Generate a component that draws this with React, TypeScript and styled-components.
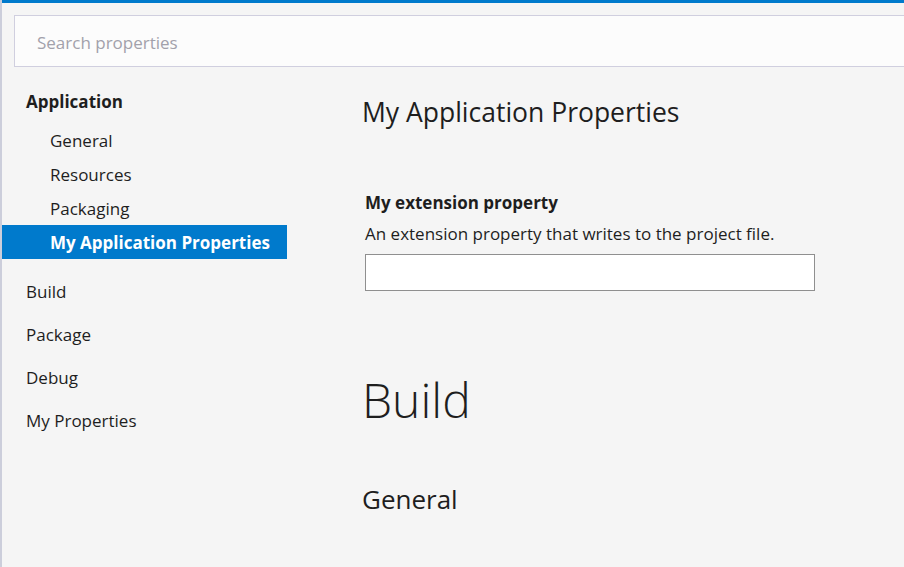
import React from "react";
import styled, { createGlobalStyle } from "styled-components";

const Global = createGlobalStyle`
  html, body { margin: 0; padding: 0; background: #f5f5f5; }
  body { font-family: "Open Sans", "Noto Sans", sans-serif; color: #1e1e1e; }
  * { box-sizing: border-box; }
`;

const Page = styled.div`
  width: 904px;
  height: 567px;
  overflow: hidden;
  display: flex;
  flex-direction: column;
  border-left: 2px solid #cccedb;
  background: #f5f5f5;
`;

const TopBar = styled.div`
  height: 3px;
  background: #007acc;
  flex: none;
`;

const SearchRow = styled.div`
  padding: 12px 0 0 12px;
  margin-right: -20px;
  flex: none;
`;

const SearchBox = styled.input`
  display: block;
  width: 100%;
  height: 52px;
  border: 1px solid #d0cfdf;
  background: #fcfcfc;
  padding: 3px 0 0 22px;
  font-family: "Open Sans", sans-serif;
  font-size: 17px;
  color: #1e1e1e;
  outline: none;
  &::placeholder { color: #a2a1ab; }
`;

const Body = styled.div`
  flex: 1;
  display: grid;
  grid-template-columns: 285px 1fr;
  padding-top: 13px;
`;

const Nav = styled.nav`
  display: flex;
  flex-direction: column;
`;

const NavTop = styled.div<{ $bold?: boolean }>`
  height: 43px;
  display: flex;
  align-items: center;
  padding-left: 24px;
  font-size: 17px;
  font-weight: ${(p) => (p.$bold ? 700 : 400)};
`;

const NavGroup = styled.div`
  display: flex;
  flex-direction: column;
  margin-bottom: 11px;
`;

const NavSub = styled.div<{ $selected?: boolean }>`
  height: 34px;
  display: flex;
  align-items: center;
  padding-left: 48px;
  font-size: 17px;
  font-weight: ${(p) => (p.$selected ? 700 : 400)};
  background: ${(p) => (p.$selected ? "#007acc" : "transparent")};
  color: ${(p) => (p.$selected ? "#ffffff" : "#1e1e1e")};
`;

const Content = styled.main`
  padding: 16px 0 0 75px;
  display: flex;
  flex-direction: column;
  align-items: flex-start;
`;

const SectionTitle = styled.h2`
  margin: 0;
  font-size: 26.5px;
  line-height: 32px;
  font-weight: 400;
`;

const Property = styled.div`
  margin: 64px 0 0 3px;
  display: flex;
  flex-direction: column;
`;

const PropLabel = styled.div`
  font-size: 17px;
  line-height: 22px;
  font-weight: 700;
`;

const PropDesc = styled.div`
  margin-top: 9px;
  font-size: 17px;
  line-height: 22px;
`;

const PropInput = styled.input`
  margin-top: 9px;
  width: 450px;
  height: 37px;
  border: 1px solid #8f8f8f;
  background: #ffffff;
  outline: none;
`;

const CategoryTitle = styled.h1`
  margin: 77px 0 0;
  font-size: 48px;
  line-height: 64px;
  font-weight: 300;
`;

const SubTitle = styled.h2`
  margin: 51px 0 0;
  font-size: 26px;
  line-height: 32px;
  font-weight: 400;
`;

export default function App() {
  return (
    <>
      <Global />
      <Page>
        <TopBar />
        <SearchRow>
          <SearchBox placeholder="Search properties" />
        </SearchRow>
        <Body>
          <Nav>
            <NavTop $bold>Application</NavTop>
            <NavGroup>
              <NavSub>General</NavSub>
              <NavSub>Resources</NavSub>
              <NavSub>Packaging</NavSub>
              <NavSub $selected>My Application Properties</NavSub>
            </NavGroup>
            <NavTop>Build</NavTop>
            <NavTop>Package</NavTop>
            <NavTop>Debug</NavTop>
            <NavTop>My Properties</NavTop>
          </Nav>
          <Content>
            <SectionTitle>My Application Properties</SectionTitle>
            <Property>
              <PropLabel>My extension property</PropLabel>
              <PropDesc>An extension property that writes to the project file.</PropDesc>
              <PropInput />
            </Property>
            <CategoryTitle>Build</CategoryTitle>
            <SubTitle>General</SubTitle>
          </Content>
        </Body>
      </Page>
    </>
  );
}
